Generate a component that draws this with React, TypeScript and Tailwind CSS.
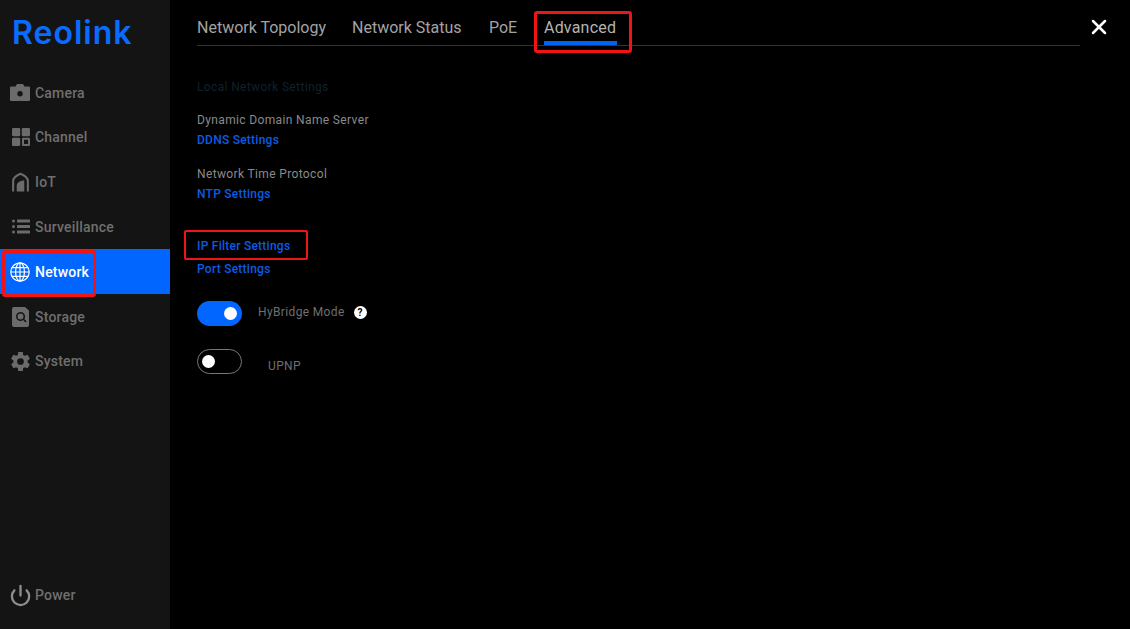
import { Power, X } from "lucide-react";
import type { JSX, ReactNode } from "react";

const font = { fontFamily: "Roboto, sans-serif" };

function CameraIcon(): JSX.Element {
  return (
    <svg viewBox="0 0 20 17" className="w-5 h-[17px]">
      <path
        fill="#6b6b6b"
        fillRule="evenodd"
        d="M1 2.500h4.500L7 0h6l1.500 2.500H19a1 1 0 0 1 1 1V16a1 1 0 0 1-1 1H1a1 1 0 0 1-1-1V3.500a1 1 0 0 1 1-1ZM10 7a2.700 2.700 0 1 0 0 5.400A2.700 2.700 0 0 0 10 7Z"
      />
    </svg>
  );
}

function ChannelIcon(): JSX.Element {
  return (
    <svg viewBox="0 0 18 18" className="w-[18px] h-[18px] ml-[1.5px]" fill="#6b6b6b">
      <rect x="0" y="0" width="8.200" height="8.200" rx="1.200" />
      <rect x="9.800" y="0" width="8.200" height="8.200" rx="1.200" />
      <rect x="0" y="9.800" width="8.200" height="8.200" rx="1.200" />
      <path
        fillRule="evenodd"
        d="M11 9.800h6a1 1 0 0 1 1 1V17a1 1 0 0 1-1 1h-6a1 1 0 0 1-1-1v-6.200a1 1 0 0 1 1-1Zm1 2v4.200h4v-4.200Z"
      />
    </svg>
  );
}

function IotIcon(): JSX.Element {
  return (
    <svg viewBox="0 0 18 20" className="w-[17px] h-5 ml-[2px]" fill="none">
      <path d="M1.200 20V9C1.200 6 5 3 9 1.300c4 1.700 7.800 4.700 7.800 7.700V20" stroke="#6b6b6b" strokeWidth="2.200" />
      <path d="M5 20v-6c0-3 3-5.500 8-5.500V20Z" fill="#6b6b6b" />
    </svg>
  );
}

function ListIcon(): JSX.Element {
  return (
    <svg viewBox="0 0 18 15" className="w-[18px] h-[15px] ml-[1.5px]" fill="#6b6b6b">
      <circle cx="1.500" cy="2" r="1.500" />
      <circle cx="1.500" cy="7.500" r="1.500" />
      <circle cx="1.500" cy="13" r="1.500" />
      <rect x="5" y="0.500" width="13" height="3" rx="0.500" />
      <rect x="5" y="6" width="13" height="3" rx="0.500" />
      <rect x="5" y="11.500" width="13" height="3" rx="0.500" />
    </svg>
  );
}

function GlobeIcon(): JSX.Element {
  return (
    <svg viewBox="0 0 20 20" className="w-5 h-5" fill="none" stroke="#ffffff" strokeWidth="1.200">
      <circle cx="10" cy="10" r="9.200" />
      <ellipse cx="10" cy="10" rx="4.400" ry="9.200" />
      <path d="M10 .8v18.400M.8 10h18.400M2 5.700h16M2 14.300h16" />
    </svg>
  );
}

function StorageIcon(): JSX.Element {
  return (
    <svg viewBox="0 0 17 20" className="w-[17px] h-5 ml-[2px]">
      <path
        fill="#6b6b6b"
        fillRule="evenodd"
        d="M2 0h11l4 3.500V18a2 2 0 0 1-2 2H2a2 2 0 0 1-2-2V2a2 2 0 0 1 2-2Zm6.500 5a4.500 4.500 0 1 0 2.700 8.100l2.300 2.300 1.100-1.100-2.300-2.300A4.500 4.500 0 0 0 8.500 5Zm0 1.500a3 3 0 1 1 0 6 3 3 0 0 1 0-6Z"
      />
    </svg>
  );
}

function GearIcon(): JSX.Element {
  return (
    <svg viewBox="0 0 24 24" className="w-[23px] h-[23px] ml-[-1.5px]">
      <path
        fill="#6b6b6b"
        d="M19.400 13a7.600 7.600 0 0 0 0-2l2.400-1.900-2.400-4.200-2.900 1.200a7.500 7.500 0 0 0-1.700-1L14.400 2H9.600l-.4 3.100a7.500 7.500 0 0 0-1.700 1L4.600 4.900 2.200 9.100 4.600 11a7.600 7.600 0 0 0 0 2l-2.400 1.900 2.400 4.200 2.900-1.200a7.500 7.500 0 0 0 1.700 1l.4 3.100h4.800l.4-3.100a7.500 7.500 0 0 0 1.700-1l2.900 1.200 2.400-4.200ZM12 15.500a3.500 3.500 0 1 1 0-7 3.500 3.500 0 0 1 0 7Z"
      />
    </svg>
  );
}

const menu: { label: string; icon: ReactNode }[] = [
  { label: "Camera", icon: <CameraIcon /> },
  { label: "Channel", icon: <ChannelIcon /> },
  { label: "IoT", icon: <IotIcon /> },
  { label: "Surveillance", icon: <ListIcon /> },
  { label: "Network", icon: <GlobeIcon /> },
  { label: "Storage", icon: <StorageIcon /> },
  { label: "System", icon: <GearIcon /> },
];

function Sidebar(): JSX.Element {
  return (
    <aside className="w-[170px] h-full shrink-0 bg-[#141414] flex flex-col">
      <div className="h-[70.2px] pl-3 pt-[12px] font-['Inter'] text-[32px] leading-[42px] font-semibold tracking-[1px] text-[#0a6cff]">
        Reolink
      </div>
      {menu.map((item) => {
        const active = item.label === "Network";
        return (
          <div
            key={item.label}
            className={
              active
                ? "relative h-[44.8px] flex items-center bg-[#0066ff] text-white"
                : "relative h-[44.8px] flex items-center text-[#6f6f6f]"
            }
          >
            <span className="w-[35px] pl-[10px] flex items-center justify-start">{item.icon}</span>
            <span className="text-sm font-medium tracking-[0.2px]">{item.label}</span>
            {active && (
              <span className="absolute left-[2px] top-[1px] w-[94px] h-[47px] border-[3px] border-[#f01414] rounded-[3px]" />
            )}
          </div>
        );
      })}
      <div className="mt-auto mb-[24px] h-5 flex items-center text-[#6f6f6f]">
        <span className="w-[35px] pl-[9px] flex items-center">
          <Power size={23} strokeWidth={2.400} className="text-[#8f8f8f]" />
        </span>
        <span className="text-sm font-medium tracking-[0.2px]">Power</span>
      </div>
    </aside>
  );
}

function Tabs(): JSX.Element {
  return (
    <div className="flex items-start h-[46px] w-[883px] border-b border-[#333333] text-base tracking-normal text-[#a3a3a3]">
      <span className="mt-4 w-[155px]">Network Topology</span>
      <span className="mt-4 w-[137px]">Network Status</span>
      <span className="mt-4 w-[55px]">PoE</span>
      <div className="relative h-[46px] w-[73px] text-[#b4b4b4]">
        <span className="block mt-4 tracking-[0.2px]">Advanced</span>
        <span className="absolute left-0 right-0 top-[41px] h-1 bg-[#0062f0]" />
        <span className="absolute left-[-10px] top-[11px] w-[98px] h-[42px] border-[3px] border-[#f01414] rounded-[3px]" />
      </div>
    </div>
  );
}

function Toggle({ on }: { on: boolean }): JSX.Element {
  if (on) {
    return (
      <span className="w-[45px] h-[25px] rounded-full bg-[#0066ff] flex items-center justify-end pr-[5px]">
        <span className="w-[13px] h-[13px] rounded-full bg-white" />
      </span>
    );
  }
  return (
    <span className="w-[45px] h-[25px] rounded-full border border-[#777777] flex items-center pl-[4px]">
      <span className="w-[13px] h-[13px] rounded-full bg-white" />
    </span>
  );
}

function Content(): JSX.Element {
  return (
    <div className="relative flex-1 pl-[27px] text-xs tracking-[0.36px]">
      <Tabs />
      <button className="absolute left-[917px] top-[15px] text-white">
        <X size={24} strokeWidth={2.500} />
      </button>
      <p className="mt-[33px] leading-4 text-[#10202a]">Local Network Settings</p>
      <p className="mt-[17px] leading-4 text-[#8a8a8a]">Dynamic Domain Name Server</p>
      <p className="mt-[4px] leading-4 text-[#0a5ce6] font-medium tracking-[0.25px]">DDNS Settings</p>
      <p className="mt-[18px] leading-4 text-[#8a8a8a]">Network Time Protocol</p>
      <p className="mt-[4px] leading-4 text-[#0a5ce6] font-medium tracking-[0.25px]">NTP Settings</p>
      <div className="relative mt-[36px] leading-4 text-[#0a5ce6] font-medium tracking-[0.25px]">
        IP Filter Settings
        <span className="absolute left-[-13px] top-[-8px] w-[124px] h-[30px] border-[2px] border-[#f01414] rounded-[2px]" />
      </div>
      <p className="mt-[7px] leading-4 text-[#0a5ce6] font-medium tracking-[0.25px]">Port Settings</p>
      <div className="mt-[24px] flex items-center">
        <Toggle on />
        <span className="ml-[16px] mb-[4px] text-[#6f6f6f]">HyBridge Mode</span>
        <span className="ml-[9px] mb-[2px] w-[13px] h-[13px] rounded-full bg-white text-black flex items-center justify-center text-[10px] font-bold leading-none">
          ?
        </span>
      </div>
      <div className="mt-[23px] flex items-center">
        <Toggle on={false} />
        <span className="ml-[26px] mt-[8px] text-[#6f6f6f]">UPNP</span>
      </div>
    </div>
  );
}

export default function App(): JSX.Element {
  return (
    <div className="w-[1130px] h-[629px] bg-black flex overflow-hidden" style={font}>
      <Sidebar />
      <Content />
    </div>
  );
}
